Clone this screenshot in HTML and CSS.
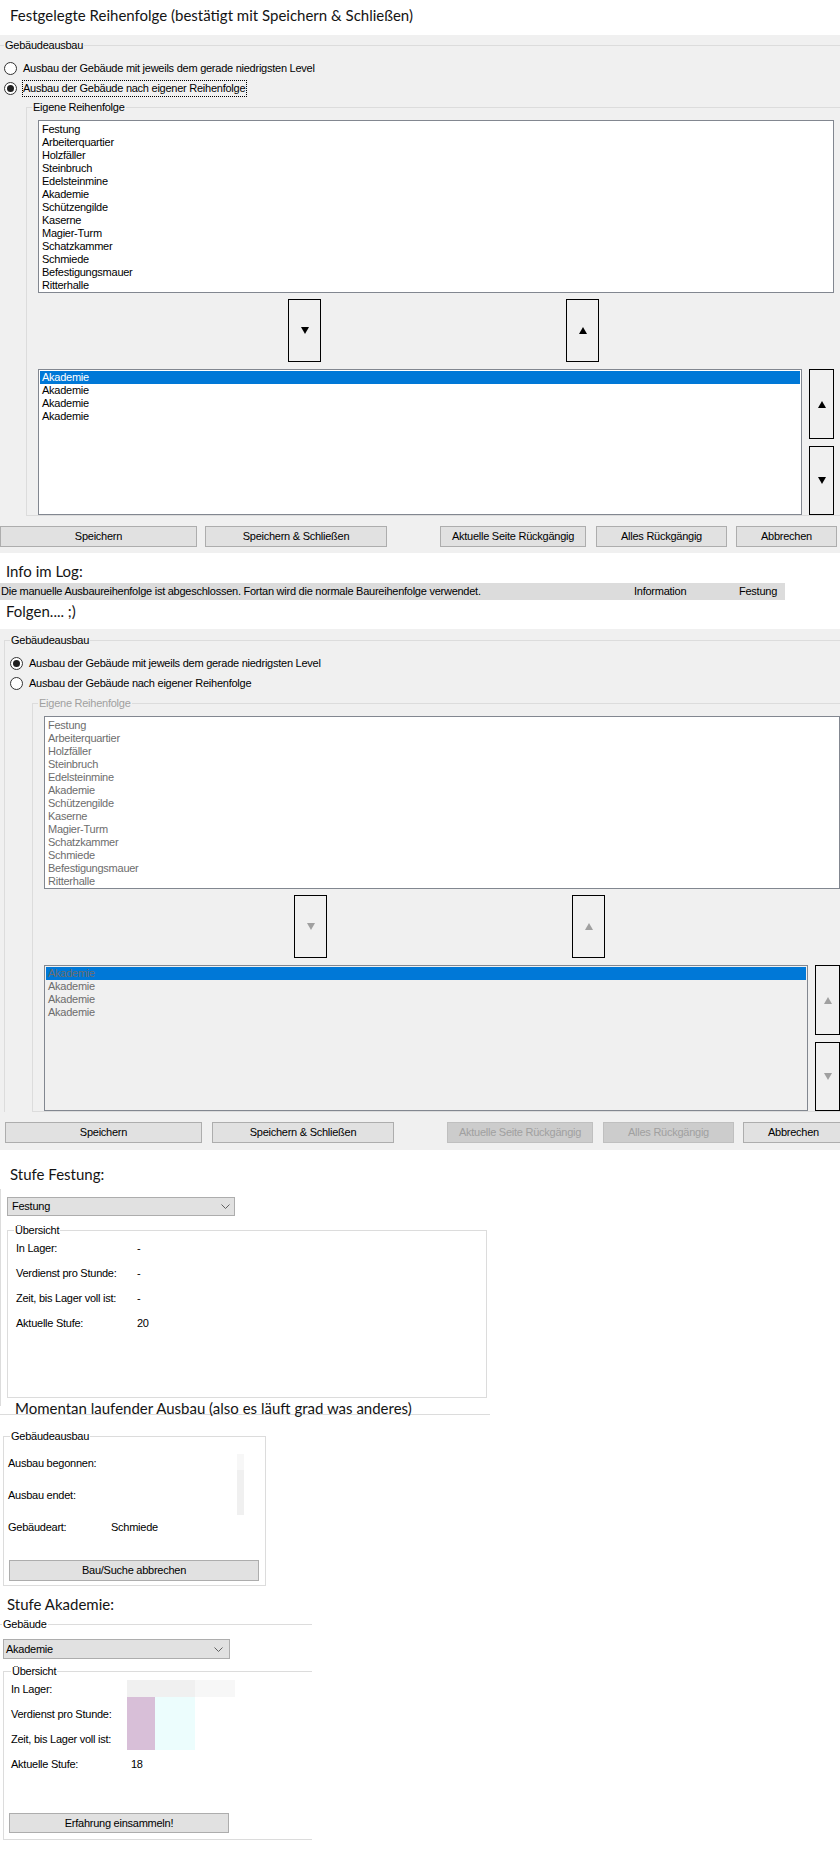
FILE: index.html
```html
<!DOCTYPE html>
<html lang="de">
<head>
<meta charset="utf-8">
<title>Gebäudeausbau</title>
<link rel="stylesheet" href="styles.css">
</head>
<body>
<h1 class="cap cap-title">Festgelegte Reihenfolge (bestätigt mit Speichern &amp; Schließen)</h1>

<section class="panel p1">
  <fieldset class="grp outer">
    <legend>Gebäudeausbau</legend>
    <div class="radio-row"><span class="radio"></span><span class="rlabel">Ausbau der Gebäude mit jeweils dem gerade niedrigsten Level</span></div>
    <div class="radio-row"><span class="radio checked"></span><span class="rlabel focus">Ausbau der Gebäude nach eigener Reihenfolge</span></div>
    <fieldset class="grp inner">
      <legend>Eigene Reihenfolge</legend>
      <ul class="listbox lb-main">
        <li>Festung</li><li>Arbeiterquartier</li><li>Holzfäller</li><li>Steinbruch</li><li>Edelsteinmine</li><li>Akademie</li><li>Schützengilde</li><li>Kaserne</li><li>Magier-Turm</li><li>Schatzkammer</li><li>Schmiede</li><li>Befestigungsmauer</li><li>Ritterhalle</li>
      </ul>
      <div class="move-row">
        <button class="arrow-btn move"><svg class="tri" viewBox="0 0 8 7" width="8" height="7"><polygon points="0,0 8,0 4,7"/></svg></button>
        <button class="arrow-btn move"><svg class="tri" viewBox="0 0 8 7" width="8" height="7"><polygon points="4,0 8,7 0,7"/></svg></button>
      </div>
      <div class="order-row">
        <ul class="listbox lb-order">
          <li class="sel">Akademie</li><li>Akademie</li><li>Akademie</li><li>Akademie</li>
        </ul>
        <div class="side-btns">
          <button class="arrow-btn side-up"><svg class="tri" viewBox="0 0 8 7" width="8" height="7"><polygon points="4,0 8,7 0,7"/></svg></button>
          <button class="arrow-btn side-down"><svg class="tri" viewBox="0 0 8 7" width="8" height="7"><polygon points="0,0 8,0 4,7"/></svg></button>
        </div>
      </div>
    </fieldset>
  </fieldset>
  <div class="btn-row">
    <button class="btn b-save">Speichern</button>
    <button class="btn b-sc">Speichern &amp; Schließen</button>
    <button class="btn b-cur">Aktuelle Seite Rückgängig</button>
    <button class="btn b-all">Alles Rückgängig</button>
    <button class="btn b-cancel">Abbrechen</button>
  </div>
</section>

<h2 class="cap cap-info">Info im Log:</h2>
<div class="log-row"><span>Die manuelle Ausbaureihenfolge ist abgeschlossen. Fortan wird die normale Baureihenfolge verwendet.</span><span>Information</span><span>Festung</span></div>
<h2 class="cap cap-follow">Folgen.... ;)</h2>

<section class="panel p2">
  <fieldset class="grp outer">
    <legend>Gebäudeausbau</legend>
    <div class="radio-row"><span class="radio checked"></span><span class="rlabel">Ausbau der Gebäude mit jeweils dem gerade niedrigsten Level</span></div>
    <div class="radio-row"><span class="radio"></span><span class="rlabel">Ausbau der Gebäude nach eigener Reihenfolge</span></div>
    <fieldset class="grp inner disabled">
      <legend>Eigene Reihenfolge</legend>
      <ul class="listbox lb-main">
        <li>Festung</li><li>Arbeiterquartier</li><li>Holzfäller</li><li>Steinbruch</li><li>Edelsteinmine</li><li>Akademie</li><li>Schützengilde</li><li>Kaserne</li><li>Magier-Turm</li><li>Schatzkammer</li><li>Schmiede</li><li>Befestigungsmauer</li><li>Ritterhalle</li>
      </ul>
      <div class="move-row">
        <button class="arrow-btn move"><svg class="tri" viewBox="0 0 8 7" width="8" height="7"><polygon points="0,0 8,0 4,7"/></svg></button>
        <button class="arrow-btn move"><svg class="tri" viewBox="0 0 8 7" width="8" height="7"><polygon points="4,0 8,7 0,7"/></svg></button>
      </div>
      <div class="order-row">
        <ul class="listbox lb-order">
          <li class="sel">Akademie</li><li>Akademie</li><li>Akademie</li><li>Akademie</li>
        </ul>
        <div class="side-btns">
          <button class="arrow-btn side-up"><svg class="tri" viewBox="0 0 8 7" width="8" height="7"><polygon points="4,0 8,7 0,7"/></svg></button>
          <button class="arrow-btn side-down"><svg class="tri" viewBox="0 0 8 7" width="8" height="7"><polygon points="0,0 8,0 4,7"/></svg></button>
        </div>
      </div>
    </fieldset>
  </fieldset>
  <div class="btn-row">
    <button class="btn b-save">Speichern</button>
    <button class="btn b-sc">Speichern &amp; Schließen</button>
    <button class="btn b-cur off">Aktuelle Seite Rückgängig</button>
    <button class="btn b-all off">Alles Rückgängig</button>
    <button class="btn b-cancel">Abbrechen</button>
  </div>
</section>

<h2 class="cap cap-festung">Stufe Festung:</h2>
<div class="frame">
  <div class="combo combo-f"><span>Festung</span><svg class="chev" viewBox="0 0 9 5" width="9" height="5"><polyline points="0.5,0.5 4.5,4.5 8.5,0.5"/></svg></div>
  <fieldset class="grp overview">
    <legend>Übersicht</legend>
    <div class="stats">
      <span>In Lager:</span><span>-</span>
      <span>Verdienst pro Stunde:</span><span>-</span>
      <span>Zeit, bis Lager voll ist:</span><span>-</span>
      <span>Aktuelle Stufe:</span><span>20</span>
    </div>
  </fieldset>
</div>
<h2 class="cap cap-running">Momentan laufender Ausbau (also es läuft grad was anderes)</h2>

<fieldset class="grp running">
  <legend>Gebäudeausbau</legend>
  <div class="run-body">
    <div class="run-stats">
      <span>Ausbau begonnen:</span><span></span>
      <span>Ausbau endet:</span><span></span>
      <span>Gebäudeart:</span><span>Schmiede</span>
    </div>
    <div class="strip"></div>
  </div>
  <button class="btn b-abort">Bau/Suche abbrechen</button>
</fieldset>

<h2 class="cap cap-akademie">Stufe Akademie:</h2>
<fieldset class="grp building">
  <legend>Gebäude</legend>
  <div class="combo combo-a"><span>Akademie</span><svg class="chev" viewBox="0 0 9 5" width="9" height="5"><polyline points="0.5,0.5 4.5,4.5 8.5,0.5"/></svg></div>
  <fieldset class="grp overview2">
    <legend>Übersicht</legend>
    <div class="stats stats2">
      <span>In Lager:</span><span></span>
      <span>Verdienst pro Stunde:</span><span></span>
      <span>Zeit, bis Lager voll ist:</span><span></span>
      <span>Aktuelle Stufe:</span><span>18</span>
      <i class="blk blk-grey"></i><i class="blk blk-light"></i><i class="blk blk-pink"></i><i class="blk blk-cyan"></i>
    </div>
    <button class="btn b-xp">Erfahrung einsammeln!</button>
  </fieldset>
</fieldset>
</body>
</html>
```
FILE: styles.css
```css
* { box-sizing: border-box; }
html, body { margin: 0; padding: 0; background: #fff; }
body {
  width: 840px;
  height: 1849px;
  overflow: hidden;
  font: 11px/13px "Liberation Sans", Arial, sans-serif;
  letter-spacing: -0.25px;
  color: #000;
}
ul { margin: 0; padding: 0; list-style: none; }
button { font: inherit; letter-spacing: inherit; color: inherit; margin: 0; padding: 0; }

/* headings (Calibri-like) */
.cap {
  margin: 0;
  font-family: Lato, "Open Sans", sans-serif;
  font-weight: 400;
  font-size: 15px;
  line-height: 20px;
  letter-spacing: 0;
  color: #141414;
}
.cap-title { padding: 5px 0 10px 10px; }
.cap-info { padding: 8px 0 2px 6px; }
.cap-follow { padding: 1px 0 8px 6px; }
.cap-festung { padding: 14px 0 5px 10px; }
.cap-running {
  margin-top: -8px;
  padding-left: 15px;
  background: linear-gradient(#dcdcdc, #dcdcdc) no-repeat 0 16px / 490px 1px;
}
.cap-akademie { margin-top: 8px; padding-left: 7px; }

/* panels */
.panel { background: #f0f0f0; overflow: hidden; width: 840px; }
.p1 { padding: 3px 0 6px; }
.p2 { padding: 4px 0 7px; }

/* group boxes */
.grp {
  margin: 0;
  padding: 0;
  min-width: 0;
  border: 1px solid #dcdcdc;
}
.grp > legend {
  padding: 0 1px;
  line-height: 14px;
  margin-left: 5px;
}
.outer {
  width: 842px;
  border-right: none;
  border-bottom: none;
  padding-top: 6px;
}
.p1 .outer { margin-left: -2px; }
.p2 .outer { margin-left: 4px; }

.radio-row {
  display: flex;
  align-items: center;
  height: 20px;
  padding-left: 5px;
}
.radio {
  width: 13px;
  height: 13px;
  border: 1px solid #333;
  border-radius: 50%;
  background: #fff;
  display: flex;
  align-items: center;
  justify-content: center;
  flex: none;
}
.radio.checked::after {
  content: "";
  width: 7px;
  height: 7px;
  border-radius: 50%;
  background: #1f1f1f;
}
.rlabel { margin-left: 6px; white-space: nowrap; }
.rlabel.focus {
  margin-left: 5px;
  padding: 1px 1px 1px 0;
  border: 1px dotted #000;
}

.inner {
  margin: 2px 0 0 27px;
  border-right: none;
}
.p2 .inner { margin-top: 3px; }

.listbox {
  background: #fff;
  border: 1px solid #828790;
  padding: 1px;
}
.listbox li {
  height: 13px;
  line-height: 13px;
  padding-left: 2px;
  white-space: nowrap;
}
.lb-main {
  margin: 6px 0 0 11px;
  width: 796px;
  height: 173px;
  padding-top: 2px;
}
.listbox li.sel { background: #0078d7; color: #fff; }

.move-row {
  display: flex;
  gap: 245px;
  margin-top: 6px;
  padding-left: 261px;
}
.arrow-btn {
  background: #f0f0f0;
  border: 1px solid #000;
  display: flex;
  align-items: center;
  justify-content: center;
}
.move { width: 33px; height: 63px; }
.tri { display: block; fill: #000; }

.order-row {
  display: flex;
  gap: 7px;
  margin-top: 7px;
  padding-left: 11px;
}
.lb-order { width: 764px; height: 146px; }
.side-btns {
  display: flex;
  flex-direction: column;
  gap: 7px;
  width: 25px;
}
.side-up { height: 70px; }
.side-down { height: 69px; }

/* disabled look (second panel) */
.disabled > legend { color: #a0a0a0; }
.disabled .listbox li { color: #6d6d6d; }
.disabled .lb-order { background: #f0f0f0; }
.disabled .listbox li.sel { color: #6d6d6d; }
.disabled .tri { fill: #a0a0a0; }

/* buttons */
.btn-row { display: flex; margin-top: 10px; }
.p2 .btn-row { padding-left: 5px; }
.btn {
  height: 21px;
  background: #e1e1e1;
  border: 1px solid #adadad;
  text-align: center;
  white-space: nowrap;
  flex: none;
}
.b-save { width: 197px; }
.b-sc { width: 182px; margin-left: 8px; }
.p2 .b-sc { margin-left: 10px; }
.b-cur { width: 146px; margin-left: 53px; }
.b-all { width: 131px; margin-left: 10px; }
.b-cancel { width: 101px; margin-left: 9px; }
.btn.off { background: #cccccc; border-color: #bfbfbf; color: #a0a0a0; }

/* log */
.log-row {
  display: grid;
  grid-template-columns: 633px 105px auto;
  width: 785px;
  height: 17px;
  line-height: 17px;
  padding-left: 1px;
  background: #dcdcdc;
  white-space: nowrap;
}

/* Stufe Festung */
.frame {
  width: 490px;
  border-left: 1px solid #dcdcdc;
  padding: 8px 0 8px 6px;
}
.combo {
  display: flex;
  align-items: center;
  justify-content: space-between;
  background: #e1e1e1;
  border: 1px solid #adadad;
}
.combo-f { width: 228px; height: 19px; padding: 0 4px 0 4px; }
.chev { display: block; fill: none; stroke: #606060; stroke-width: 1; }
.overview {
  margin-top: 7px;
  width: 480px;
  height: 175px;
}
.overview > legend { margin-left: 6px; }
.stats {
  display: grid;
  grid-template-columns: 121px auto;
  grid-auto-rows: 25px;
  align-items: center;
  padding-left: 8px;
  margin-top: -1px;
}

/* laufender Ausbau */
.running {
  margin: 11px 0 0 3px;
  width: 263px;
  padding: 0 0 4px;
}
.running > legend { margin-left: 6px; }
.run-body { display: flex; padding-top: 4px; }
.run-stats {
  width: 233px;
  display: grid;
  grid-template-columns: 103px auto;
  grid-template-rows: 32px 32px 33px;
  align-items: center;
  padding-left: 4px;
}
.strip {
  width: 7px;
  height: 61px;
  margin-top: 7px;
  background: linear-gradient(#f7f7f7 0 16px, #f0f0f0 16px);
}
.b-abort { display: block; width: 250px; margin: 16px 0 0 5px; }

/* Stufe Akademie */
.building {
  margin-top: 3px;
  width: 312px;
  border-left: none;
  border-right: none;
  border-bottom: none;
  padding-top: 8px;
}
.building > legend { margin-left: 2px; }
.combo-a { width: 227px; height: 20px; margin-left: 3px; padding: 0 6px 0 2px; }
.overview2 {
  margin: 5px 0 0 3px;
  width: 309px;
  border-right: none;
  padding-bottom: 6px;
}
.overview2 > legend { margin-left: 7px; }
.stats2 {
  position: relative;
  grid-template-columns: 120px auto;
  padding-left: 7px;
}
.blk { position: absolute; display: block; }
.blk-grey { left: 123px; top: 3px; width: 68px; height: 17px; background: #f0f0f0; }
.blk-light { left: 191px; top: 3px; width: 40px; height: 17px; background: #f7f7f7; }
.blk-pink { left: 123px; top: 20px; width: 28px; height: 53px; background: #d8bfd8; }
.blk-cyan { left: 151px; top: 20px; width: 40px; height: 53px; background: #ecfdfd; }
.b-xp { display: block; width: 220px; height: 20px; margin: 36px 0 0 5px; }
```
